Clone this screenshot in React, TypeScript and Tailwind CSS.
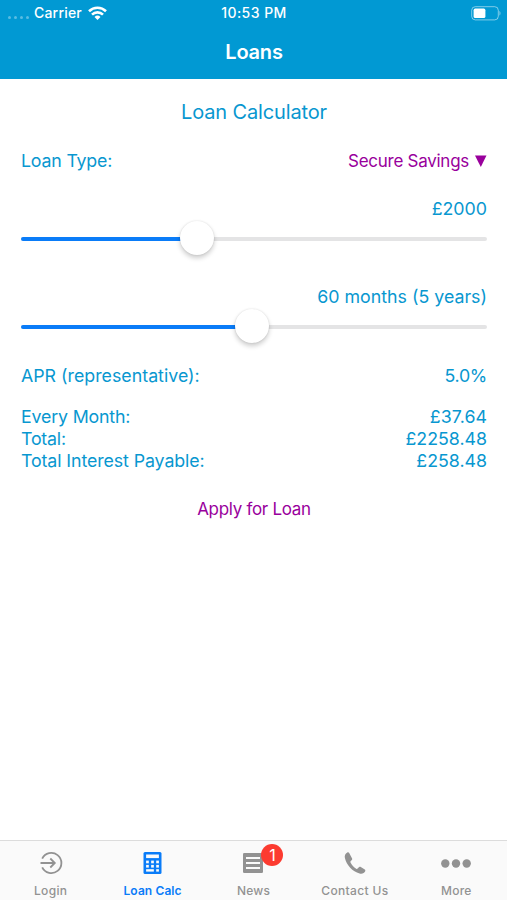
import React from 'react';

interface IRow {
  label: string;
  value: string;
  labelClass: string;
  valueClass: string;
}

interface ISlider {
  percent: number;
}

interface ITab {
  label: string;
  labelClass: string;
  active?: boolean;
  badge?: number;
  icon: React.ReactNode;
}

const totals: IRow[] = [
  { label: 'Every Month:', value: '£37.64', labelClass: 'tracking-[-0.17px]', valueClass: 'tracking-[0.05px]' },
  { label: 'Total:', value: '£2258.48', labelClass: 'tracking-[-0.2px]', valueClass: 'tracking-normal' },
  { label: 'Total Interest Payable:', value: '£258.48', labelClass: 'tracking-[-0.1px]', valueClass: 'tracking-normal' },
];

function StatusBar() {
  return (
    <div className="grid grid-cols-3 items-center h-[26px] pl-2 pr-[6px] text-[14px] font-medium">
      <div className="flex items-center">
        <div className="flex gap-[3px] pt-2 w-[26px]">
          <span className="size-[3px] rounded-full bg-white/35" />
          <span className="size-[3px] rounded-full bg-white/35" />
          <span className="size-[3px] rounded-full bg-white/35" />
          <span className="size-[3px] rounded-full bg-white/35" />
        </div>
        <span className="pb-px tracking-[0.2px]">Carrier</span>
        <svg className="ml-[6px]" width="19" height="14" viewBox="0 0 19 14" fill="none" stroke="currentColor" strokeWidth="2.6">
          <path d="M1 5.2a12.2 12.2 0 0 1 17 0" />
          <path d="M4 8.6a7.9 7.9 0 0 1 11 0" />
          <path d="M9.5 14 6.5 11a4.3 4.3 0 0 1 6 0z" fill="currentColor" stroke="none" />
        </svg>
      </div>
      <div className="pb-px pr-px text-center tracking-[0.45px]">10:53 PM</div>
      <svg className="justify-self-end" width="30" height="15" viewBox="0 0 30 15" fill="none">
        <rect x="0.7" y="0.7" width="26.6" height="13.2" rx="3.6" stroke="white" strokeOpacity="0.5" />
        <rect x="2.6" y="2.6" width="11.8" height="9.4" rx="1.6" fill="white" />
        <path d="M28.4 5v4.6c1.5-.6 1.5-4 0-4.6z" fill="white" fillOpacity="0.5" />
      </svg>
    </div>
  );
}

function Row(props: IRow) {
  return (
    <div className="flex justify-between leading-[22px]">
      <span className={props.labelClass}>{props.label}</span>
      <span className={props.valueClass}>{props.value}</span>
    </div>
  );
}

function Slider(props: ISlider) {
  return (
    <div className="relative flex items-center h-[38px]">
      <div className="w-full h-[4px] rounded-full bg-[#e4e4e5]">
        <div className="h-full rounded-full bg-[#0a7cf8]" style={{ width: `${props.percent}%` }} />
      </div>
      <div
        className="absolute top-[1px] size-[34px] -translate-x-1/2 rounded-full bg-white shadow-[0_3px_5px_rgba(0,0,0,0.2),0_0_2px_rgba(0,0,0,0.12)]"
        style={{ left: `${props.percent}%` }}
      />
    </div>
  );
}

const LoginIcon = () => (
  <svg width="24" height="24" viewBox="0 0 24 24" fill="none" stroke="currentColor" strokeWidth="1.8">
    <path d="M3.2 7.6a10.1 10.1 0 1 1 0 8.800" />
    <path d="M1.5 12h14M11.3 7.500l4.500 4.500-4.500 4.500" />
  </svg>
);

const CalcIcon = () => (
  <svg width="24" height="24" viewBox="0 0 24 24">
    <rect x="3.5" y="1" width="18" height="22" rx="1.5" fill="currentColor" />
    <g fill="#fafafa">
      <rect x="6.1" y="3.5" width="12.8" height="3.6" />
      <rect x="6.1" y="9.6" width="2.7" height="2.7" />
      <rect x="11.15" y="9.6" width="2.7" height="2.7" />
      <rect x="16.2" y="9.6" width="2.7" height="2.7" />
      <rect x="6.1" y="13.9" width="2.7" height="2.7" />
      <rect x="11.15" y="13.9" width="2.7" height="2.7" />
      <rect x="16.2" y="13.9" width="2.7" height="2.7" />
      <rect x="6.1" y="18.2" width="7.75" height="2.4" />
      <rect x="16.2" y="18.2" width="2.7" height="2.4" />
    </g>
  </svg>
);

const NewsIcon = () => (
  <svg width="24" height="24" viewBox="0 0 24 24">
    <rect x="2" y="2" width="20" height="20" rx="1.3" fill="currentColor" />
    <g fill="#fafafa">
      <rect x="5" y="6" width="14" height="2" />
      <rect x="5" y="11" width="14" height="2" />
      <rect x="5" y="16" width="14" height="2" />
    </g>
  </svg>
);

const PhoneIcon = () => (
  <svg width="24" height="24" viewBox="0 0 24 24" fill="currentColor">
    <path d="M4.3 1.5C2.3 2.6 1.3 4.4 1.9 7c1.7 7.1 7.6 13.6 14.7 15.5 2.7.7 4.7-.5 5.6-2.3.3-.6.1-1.2-.4-1.6l-4-2.7c-.6-.4-1.2-.3-1.7.2l-1.5 1.5c-.4.4-.9.4-1.4.1-2.4-1.5-4.500-3.800-5.700-6.300-.2-.5-.1-.9.3-1.300l1-1c.5-.5.6-1 .3-1.600L6.200 2.100c-.4-.8-1.100-1.100-1.900-.6z" />
  </svg>
);

const MoreIcon = () => (
  <svg width="32" height="24" viewBox="0 0 32 24" fill="currentColor">
    <circle cx="5.3" cy="12.5" r="4.2" />
    <circle cx="16" cy="12.5" r="4.2" />
    <circle cx="26.7" cy="12.5" r="4.2" />
  </svg>
);

const tabs: ITab[] = [
  { label: 'Login', labelClass: 'tracking-[0.35px]', icon: <LoginIcon /> },
  { label: 'Loan Calc', labelClass: 'tracking-[0.1px] pl-px font-semibold', active: true, icon: <CalcIcon /> },
  { label: 'News', labelClass: 'tracking-[0.2px]', badge: 1, icon: <NewsIcon /> },
  { label: 'Contact Us', labelClass: 'tracking-[0.35px]', icon: <PhoneIcon /> },
  { label: 'More', labelClass: 'tracking-[0.2px]', icon: <MoreIcon /> },
];

function TabBar() {
  return (
    <nav className="grid grid-cols-5 h-[60px] border-t border-[#dcdcdc] bg-[#fafafa] text-[12px] font-medium">
      {tabs.map((tab) => (
        <div key={tab.label} className={`flex flex-col items-center pt-[10px] ${tab.active ? 'text-[#0a7cf8]' : 'text-[#929292]'}`}>
          <div className="relative">
            {tab.icon}
            {tab.badge && (
              <span className="absolute -top-[7px] left-[20px] flex items-center justify-center size-[22px] rounded-full bg-[#fc3b30] text-white text-[16px] font-normal">
                {tab.badge}
              </span>
            )}
          </div>
          <span className={`mt-[8px] leading-4 whitespace-nowrap ${tab.labelClass}`}>{tab.label}</span>
        </div>
      ))}
    </nav>
  );
}

function App() {
  return (
    <div className="flex flex-col h-[900px] w-full bg-white font-['Inter','Liberation_Sans',sans-serif]">
      <header className="h-[79px] bg-[#0199d3] text-white">
        <StatusBar />
        <h1 className="pt-[12px] pl-px text-center text-[20px] leading-7 font-semibold tracking-[-0.2px]">Loans</h1>
      </header>
      <main className="flex-1 px-[21px] pr-5 text-[17.8px] text-[#0897d0]">
        <h2 className="pt-[20px] text-center text-[20px] leading-[26px] tracking-[-0.15px]">Loan Calculator</h2>
        <div className="flex justify-between pt-[25px] leading-[22px]">
          <span className="tracking-[-0.2px]">Loan Type:</span>
          <button className="flex items-center text-[17px] tracking-[-0.27px] text-[#99009c]">
            <span>Secure Savings</span>
            <svg className="ml-[6px]" width="12" height="13" viewBox="0 0 12 13" fill="#99009c">
              <path d="M0 0.5h11.5L5.8 12z" />
            </svg>
          </button>
        </div>
        <div className="pt-[26px] text-right leading-[22px]">£2000</div>
        <Slider percent={37.8} />
        <div className="pt-[28px] text-right leading-[22px]">60 months (5 years)</div>
        <Slider percent={49.6} />
        <div className="pt-[19px]">
          <Row label="APR (representative):" value="5.0%" labelClass="tracking-normal" valueClass="tracking-[-0.3px]" />
        </div>
        <div className="pt-[19px]">
          {totals.map((row) => (
            <Row key={row.label} {...row} />
          ))}
        </div>
        <div className="flex justify-center pt-[26px]">
          <button className="text-[17px] leading-[22px] tracking-[-0.3px] text-[#99009c]">Apply for Loan</button>
        </div>
      </main>
      <TabBar />
    </div>
  );
}

export default App;
